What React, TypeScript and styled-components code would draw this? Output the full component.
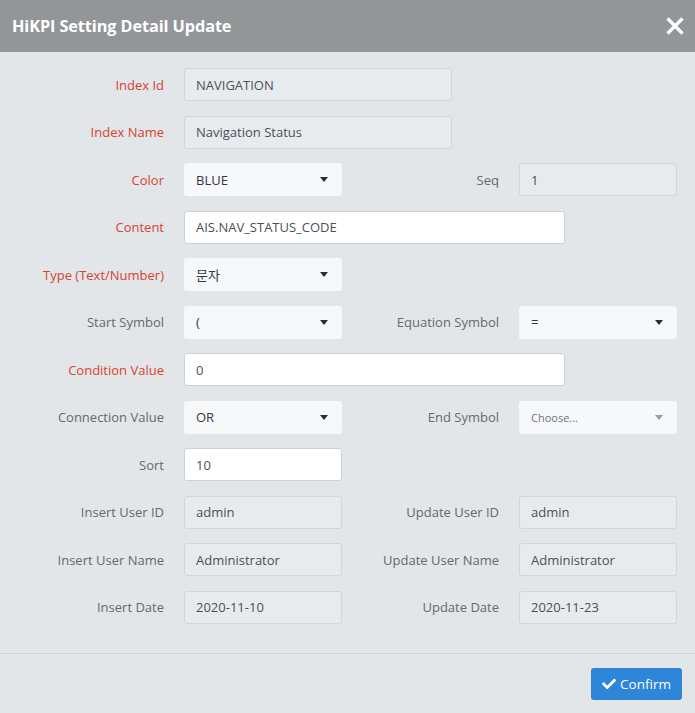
import React from "react";
import styled, { createGlobalStyle } from "styled-components";
import { FaCheck } from "react-icons/fa";

const Global = createGlobalStyle`
  html, body { margin: 0; padding: 0; background: #e2e6e9; }
  body { font-family: "Open Sans", "Noto Sans CJK KR", sans-serif; }
  * { box-sizing: border-box; }
`;

const Modal = styled.div`
  width: 695px;
  height: 713px;
  background: #e2e6e9;
  display: flex;
  flex-direction: column;
`;

const Header = styled.div`
  height: 52px;
  background: #939698;
  display: flex;
  align-items: center;
  justify-content: space-between;
  padding: 0 8px 0 12px;
`;

const Title = styled.h1`
  margin: 0;
  font-size: 16.3px;
  font-weight: 700;
  color: #ffffff;
  letter-spacing: -0.1px;
`;

const CloseButton = styled.button`
  background: none;
  border: none;
  padding: 0;
  width: 24px;
  height: 24px;
  display: flex;
  align-items: center;
  justify-content: center;
  cursor: pointer;
`;

const Body = styled.div`
  padding: 16px 0 29px 0;
  display: flex;
  flex-direction: column;
  gap: 14.5px;
  border-bottom: 1px solid #cfd3d6;
`;

const Row = styled.div`
  display: flex;
  align-items: center;
  height: 33px;
`;

const Label = styled.label<{ $required?: boolean; $width: number }>`
  width: ${(p) => p.$width}px;
  flex: none;
  text-align: right;
  padding-right: 20px;
  font-size: 13px;
  color: ${(p) => (p.$required ? "#d9432d" : "#65696d")};
  white-space: nowrap;
`;

const Input = styled.div<{ $width: number; $readonly?: boolean }>`
  width: ${(p) => p.$width}px;
  height: 33px;
  flex: none;
  display: flex;
  align-items: center;
  padding: 0 11px;
  font-size: 13px;
  color: #495057;
  background: ${(p) => (p.$readonly ? "#e8ebee" : "#ffffff")};
  border: 1px solid ${(p) => (p.$readonly ? "#d2d6da" : "#cdd1d5")};
  border-radius: 3px;
`;

const Select = styled.div<{ $width: number; $placeholder?: boolean }>`
  width: ${(p) => p.$width}px;
  height: 33px;
  flex: none;
  display: flex;
  align-items: center;
  justify-content: space-between;
  padding: 0 14px 0 12px;
  font-size: ${(p) => (p.$placeholder ? "11px" : "13px")};
  color: ${(p) => (p.$placeholder ? "#6e7378" : "#33373b")};
  background: #f7f8fa;
  border-radius: 3px;
`;

const Caret = styled.span<{ $muted?: boolean }>`
  width: 0;
  height: 0;
  border-left: 4px solid transparent;
  border-right: 4px solid transparent;
  border-top: 5px solid ${(p) => (p.$muted ? "#9a9da0" : "#2b2e31")};
`;

const Footer = styled.div`
  flex: 1;
  display: flex;
  justify-content: flex-end;
  align-items: flex-start;
  padding: 14px 13px 0 0;
`;

const ConfirmButton = styled.button`
  width: 91px;
  height: 32px;
  background: #2e86d8;
  border: none;
  border-radius: 3px;
  color: #ffffff;
  font-family: "Open Sans", sans-serif;
  font-size: 13.5px;
  display: flex;
  align-items: center;
  justify-content: center;
  gap: 4px;
  cursor: pointer;
  svg { width: 14px; height: 14px; }
`;

type Field =
  | { kind: "input"; value: string; width: number; readonly?: boolean }
  | { kind: "select"; value: string; width: number; placeholder?: boolean };

type RowDef = {
  label: string;
  required?: boolean;
  field: Field;
  second?: { label: string; required?: boolean; field: Field };
};

const rows: RowDef[] = [
  { label: "Index Id", required: true, field: { kind: "input", value: "NAVIGATION", width: 268, readonly: true } },
  { label: "Index Name", required: true, field: { kind: "input", value: "Navigation Status", width: 268, readonly: true } },
  {
    label: "Color",
    required: true,
    field: { kind: "select", value: "BLUE", width: 158 },
    second: { label: "Seq", field: { kind: "input", value: "1", width: 158, readonly: true } },
  },
  { label: "Content", required: true, field: { kind: "input", value: "AIS.NAV_STATUS_CODE", width: 381 } },
  { label: "Type (Text/Number)", required: true, field: { kind: "select", value: "문자", width: 158 } },
  {
    label: "Start Symbol",
    field: { kind: "select", value: "(", width: 158 },
    second: { label: "Equation Symbol", field: { kind: "select", value: "=", width: 158 } },
  },
  { label: "Condition Value", required: true, field: { kind: "input", value: "0", width: 381 } },
  {
    label: "Connection Value",
    field: { kind: "select", value: "OR", width: 158 },
    second: { label: "End Symbol", field: { kind: "select", value: "Choose...", width: 158, placeholder: true } },
  },
  { label: "Sort", field: { kind: "input", value: "10", width: 158 } },
  {
    label: "Insert User ID",
    field: { kind: "input", value: "admin", width: 158, readonly: true },
    second: { label: "Update User ID", field: { kind: "input", value: "admin", width: 158, readonly: true } },
  },
  {
    label: "Insert User Name",
    field: { kind: "input", value: "Administrator", width: 158, readonly: true },
    second: { label: "Update User Name", field: { kind: "input", value: "Administrator", width: 158, readonly: true } },
  },
  {
    label: "Insert Date",
    field: { kind: "input", value: "2020-11-10", width: 158, readonly: true },
    second: { label: "Update Date", field: { kind: "input", value: "2020-11-23", width: 158, readonly: true } },
  },
];

function renderField(f: Field) {
  if (f.kind === "input") {
    return (
      <Input $width={f.width} $readonly={f.readonly}>
        {f.value}
      </Input>
    );
  }
  return (
    <Select $width={f.width} $placeholder={f.placeholder}>
      <span>{f.value}</span>
      <Caret $muted={f.placeholder} />
    </Select>
  );
}

export default function App() {
  return (
    <>
      <Global />
      <Modal>
        <Header>
          <Title>HiKPI Setting Detail Update</Title>
          <CloseButton aria-label="close">
            <svg width="20" height="20" viewBox="0 0 20 20">
              <path d="M2.5 2.5 L17.5 17.5 M17.5 2.5 L2.5 17.5" stroke="#ffffff" strokeWidth="3.2" strokeLinecap="butt" />
            </svg>
          </CloseButton>
        </Header>
        <Body>
          {rows.map((r) => (
            <Row key={r.label}>
              <Label $width={184} $required={r.required}>
                {r.label}
              </Label>
              {renderField(r.field)}
              {r.second && (
                <>
                  <Label $width={177} $required={r.second.required}>
                    {r.second.label}
                  </Label>
                  {renderField(r.second.field)}
                </>
              )}
            </Row>
          ))}
        </Body>
        <Footer>
          <ConfirmButton>
            <FaCheck />
            Confirm
          </ConfirmButton>
        </Footer>
      </Modal>
    </>
  );
}
